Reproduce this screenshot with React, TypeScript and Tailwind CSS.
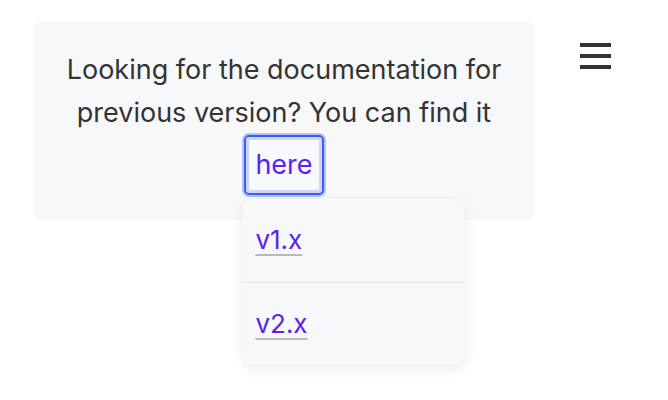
export default function App() {
  return (
    <main
      className="w-[668px] h-[400px] bg-white flex items-start pt-[22px] pl-[34px]"
      style={{ fontFamily: 'Inter, "Noto Sans", sans-serif' }}
    >
      {/* Notice box */}
      <div className="w-[500px] bg-[#f7f8fa] rounded-md pt-[26px] pb-[25px] px-4 text-center text-[27px] leading-[43px] text-[#333333]">
        Looking for the documentation for previous version? You can find it{' '}
        <span className="relative inline-block align-middle mt-[1px]">
          <button className="inline-block px-[9px] py-[7px] rounded-[5px] border-2 border-[#3d5cf5] bg-[#f8f9ff] text-[#5b21f0] leading-[42px] shadow-[0_0_0_2px_#b4c3fb,inset_0_0_0_3px_#cdd7fd]">
            here
          </button>

          {/* Versions dropdown */}
          <div className="absolute left-[-1px] top-[64px] w-[221px] bg-[#f7f8fa] rounded-lg shadow-[0_4px_14px_rgba(0,0,0,0.08)] text-left text-[26px] leading-[42px] z-10">
            {['v1.x', 'v2.x'].map((v, i) => (
              <div key={v} className={`px-[12px] py-[20px] ${i === 0 ? 'border-b-2 border-[#ececef]' : ''}`}>
                <a className="text-[#5b21f0] underline decoration-[#b8b8c0] decoration-[2px] underline-offset-[5px]">{v}</a>
              </div>
            ))}
          </div>
        </span>
      </div>

      {/* Menu toggle */}
      <div className="ml-[46px] mt-[21px] flex flex-col gap-[7px]">
        <span className="block w-[31px] h-[4px] bg-[#333333]" />
        <span className="block w-[31px] h-[4px] bg-[#333333]" />
        <span className="block w-[31px] h-[4px] bg-[#333333]" />
      </div>
    </main>
  )
}
